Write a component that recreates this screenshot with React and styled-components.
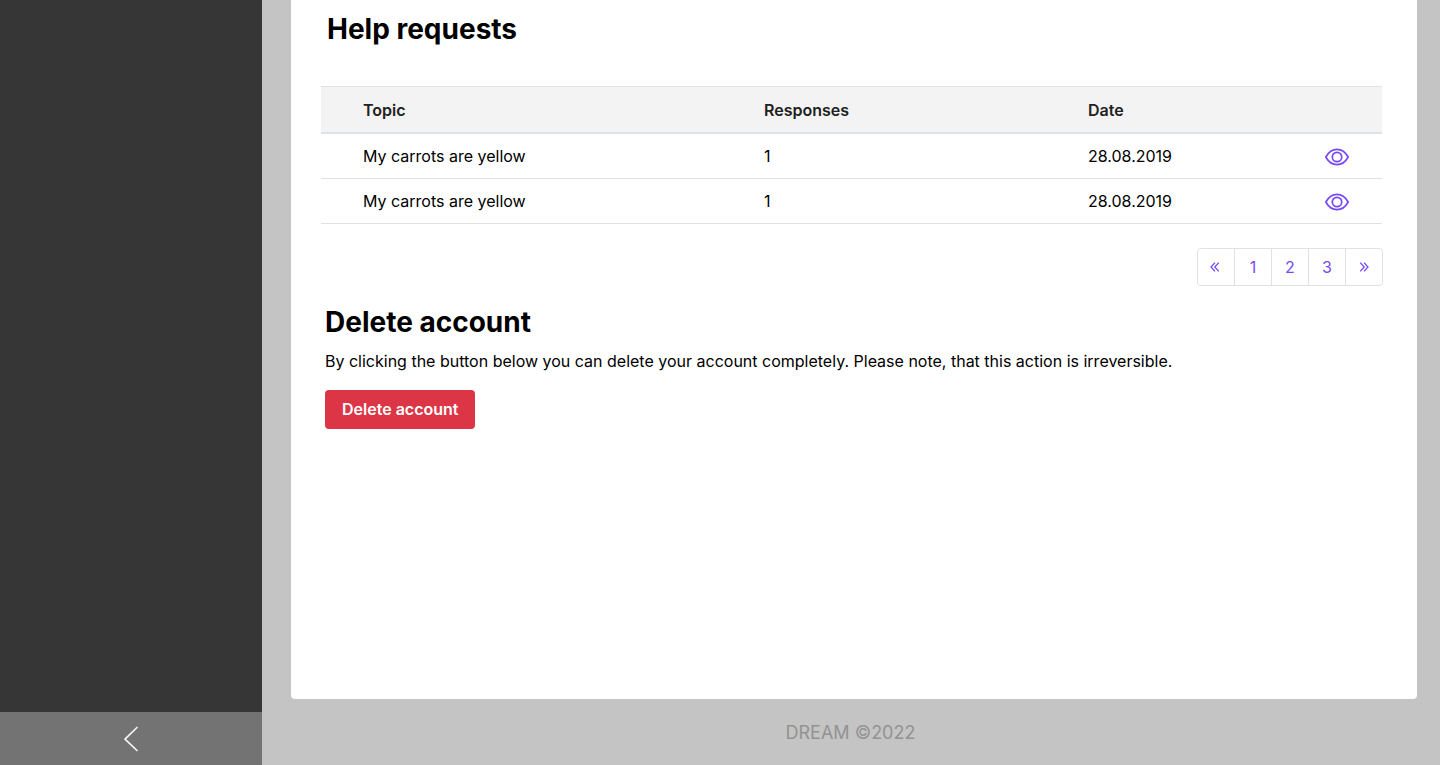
import React from "react";
import styled, { createGlobalStyle } from "styled-components";

const GlobalStyle = createGlobalStyle`
  *, *::before, *::after { box-sizing: border-box; }
  body {
    margin: 0;
    background: #c4c4c4;
    color: #000;
    font-family: Inter, "Liberation Sans", sans-serif;
    font-size: 16px;
    line-height: 24px;
  }
`;

const Page = styled.div`
  display: flex;
  min-height: 100vh;
`;

const Sidebar = styled.aside`
  flex: 0 0 262px;
  display: flex;
  flex-direction: column;
  justify-content: flex-end;
  background: #363636;
`;

const CollapseButton = styled.button`
  display: flex;
  align-items: center;
  justify-content: center;
  height: 53px;
  padding: 0;
  border: 0;
  background: #737373;
  color: #f5f5f5;
  cursor: pointer;
`;

const Main = styled.div`
  flex: 1;
  min-width: 0;
  display: flex;
  flex-direction: column;
  padding: 0 23px 0 29px;
`;

const Card = styled.main`
  flex: 1;
  padding: 8px 35px 40px 30px;
  border-radius: 0 0 4px 4px;
  background: #fff;
`;

const Title = styled.h2`
  margin: 0;
  font-size: 28px;
  font-weight: 700;
  line-height: 42px;
`;

const HelpSection = styled.section`
  ${Title} {
    padding-left: 6px;
    margin-bottom: 36px;
  }
`;

const Table = styled.table`
  width: 100%;
  table-layout: fixed;
  border-collapse: separate;
  border-spacing: 0;
`;

const Col = styled.col`
  width: ${(p) => p.$width};
`;

const HeadCell = styled.th`
  height: 48px;
  padding: 0 0 0 42px;
  border-top: 1px solid #dee2e6;
  border-bottom: 2px solid #dee2e6;
  background: #f3f3f3;
  color: #212121;
  font-weight: 600;
  text-align: left;
`;

const Cell = styled.td`
  height: 45px;
  padding: 0 0 0 42px;
  border-bottom: 1px solid #dee2e6;
`;

const ActionCell = styled(Cell)`
  padding: 2px 33px 0 0;
`;

const ViewLink = styled.a`
  display: flex;
  justify-content: flex-end;
  color: #7749f8;
`;

const Pagination = styled.nav`
  display: flex;
  justify-content: flex-end;
  margin: 24px -1px 0 0;
`;

const PageLink = styled.a`
  display: flex;
  align-items: center;
  justify-content: center;
  width: 38px;
  height: 38px;
  border: 1px solid #dee2e6;
  color: #7749f8;
  text-decoration: none;

  & + & { margin-left: -1px; }
  &:first-child { border-radius: 4px 0 0 4px; }
  &:last-child { border-radius: 0 4px 4px 0; }
`;

const DeleteSection = styled.section`
  margin-top: 15px;
  padding-left: 4px;
`;

const Note = styled.p`
  margin: 6px 0 17px;
`;

const DangerButton = styled.button`
  height: 39px;
  padding: 0 17px 1px;
  border: 0;
  border-radius: 4px;
  background: #dc3545;
  color: #fff;
  font: inherit;
  font-weight: 600;
  cursor: pointer;
`;

const Footer = styled.footer`
  padding: 22px 7px 20px 0;
  color: #939393;
  font-size: 18px;
  text-align: center;
`;

const requests = [
  { id: 1, topic: "My carrots are yellow", responses: 1, date: "28.08.2019" },
  { id: 2, topic: "My carrots are yellow", responses: 1, date: "28.08.2019" },
];

const pages = ["1", "2", "3"];

function EyeIcon() {
  return (
    <svg width="24" height="18" viewBox="0 0 24 18" fill="none" stroke="currentColor" strokeWidth="1.700" strokeLinejoin="round" aria-hidden="true">
      <path d="M.8 9C3.5 4.200 7.400 1.300 12 1.300S20.500 4.200 23.200 9C20.500 13.800 16.600 16.700 12 16.700S3.500 13.800.8 9Z" />
      <circle cx="12" cy="9" r="4.700" />
    </svg>
  );
}

function ChevronIcon() {
  return (
    <svg width="16" height="26" viewBox="0 0 16 26" fill="none" stroke="currentColor" strokeWidth="1.700" strokeLinecap="round" strokeLinejoin="round" aria-hidden="true">
      <path d="M14 1.500 2 13.200 14 24.500" />
    </svg>
  );
}

function DoubleChevronIcon({ next }) {
  return (
    <svg width="12" height="12" viewBox="0 0 12 12" fill="none" stroke="currentColor" strokeWidth="1.300" aria-hidden="true">
      <path d={next ? "M2.200 1.600 6.200 6 2.200 10.400M6 1.600 10 6 6 10.400" : "M5 1.600 1 6 5 10.400M8.800 1.600 4.800 6 8.800 10.400"} />
    </svg>
  );
}

export default function App() {
  return (
    <>
      <GlobalStyle />
      <Page>
        <Sidebar>
          <CollapseButton type="button" aria-label="Collapse sidebar">
            <ChevronIcon />
          </CollapseButton>
        </Sidebar>
        <Main>
          <Card>
            <HelpSection>
              <Title>Help requests</Title>
              <Table>
                <colgroup>
                  <Col />
                  <Col $width="324px" />
                  <Col $width="236px" />
                  <Col $width="100px" />
                </colgroup>
                <thead>
                  <tr>
                    <HeadCell scope="col">Topic</HeadCell>
                    <HeadCell scope="col">Responses</HeadCell>
                    <HeadCell scope="col">Date</HeadCell>
                    <HeadCell as="td" />
                  </tr>
                </thead>
                <tbody>
                  {requests.map((r) => (
                    <tr key={r.id}>
                      <Cell>{r.topic}</Cell>
                      <Cell>{r.responses}</Cell>
                      <Cell>{r.date}</Cell>
                      <ActionCell>
                        <ViewLink href="#" aria-label="View request">
                          <EyeIcon />
                        </ViewLink>
                      </ActionCell>
                    </tr>
                  ))}
                </tbody>
              </Table>
              <Pagination aria-label="Help request pages">
                <PageLink href="#" aria-label="Previous page">
                  <DoubleChevronIcon />
                </PageLink>
                {pages.map((p) => (
                  <PageLink key={p} href="#">{p}</PageLink>
                ))}
                <PageLink href="#" aria-label="Next page">
                  <DoubleChevronIcon next />
                </PageLink>
              </Pagination>
            </HelpSection>
            <DeleteSection>
              <Title>Delete account</Title>
              <Note>
                By clicking the button below you can delete your account completely. Please note, that this action is irreversible.
              </Note>
              <DangerButton type="button">Delete account</DangerButton>
            </DeleteSection>
          </Card>
          <Footer>DREAM ©2022</Footer>
        </Main>
      </Page>
    </>
  );
}
